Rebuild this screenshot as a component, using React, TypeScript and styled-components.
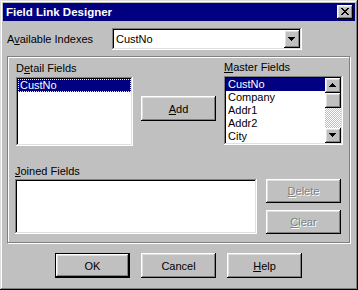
import React from "react";
import styled, { createGlobalStyle, css } from "styled-components";

const GlobalStyle = createGlobalStyle`
  html, body { margin: 0; padding: 0; background: #c0c0c0; }
  body { font-family: "Liberation Sans", Arial, sans-serif; font-size: 11px; }
  * { box-sizing: border-box; }
`;

const raised = css`
  box-shadow: inset -1px -1px #000, inset 1px 1px #fff, inset -2px -2px #808080,
    inset 2px 2px #dfdfdf;
`;

const sunken = css`
  box-shadow: inset -1px -1px #fff, inset 1px 1px #808080, inset -2px -2px #dfdfdf,
    inset 2px 2px #000;
`;

const Window = styled.div`
  width: 358px;
  height: 290px;
  padding: 3px;
  background: #c0c0c0;
  box-shadow: inset -1px -1px #000, inset 1px 1px #dfdfdf, inset -2px -2px #808080,
    inset 2px 2px #fff;
  display: flex;
  flex-direction: column;
  font-family: "Liberation Sans", Arial, sans-serif;
  font-size: 11px;
  color: #000;
`;

const TitleBar = styled.div`
  flex: none;
  height: 18px;
  background: #000080;
  color: #fff;
  display: flex;
  align-items: center;
  justify-content: space-between;
  padding: 0 2px 0 3px;
`;

const Title = styled.span`
  font-weight: bold;
  font-size: 11.5px;
  line-height: 18px;
`;

const CloseButton = styled.div`
  width: 16px;
  height: 14px;
  background: #c0c0c0;
  ${raised}
  display: flex;
  align-items: center;
  justify-content: center;
  padding: 0 1px 1px 0;
`;

const Body = styled.div`
  display: flex;
  flex-direction: column;
  padding-left: 4px;
`;

const IndexRow = styled.div`
  display: flex;
  align-items: center;
  height: 22px;
  margin-top: 7px;
`;

const FieldLabel = styled.div<{ $gap?: number }>`
  height: 13px;
  line-height: 13px;
  white-space: nowrap;
  margin-bottom: ${(p) => p.$gap ?? 2}px;
`;

const IndexLabel = styled(FieldLabel)`
  width: 105px;
  margin-bottom: 0;
`;

const Combo = styled.div`
  width: 190px;
  height: 22px;
  padding: 2px;
  background: #fff;
  ${sunken}
  display: flex;
  align-items: center;
`;

const ComboText = styled.span`
  flex: 1;
  padding-left: 2px;
  line-height: 13px;
`;

const ArrowButton = styled.div<{ $h: number }>`
  flex: none;
  width: 16px;
  height: ${(p) => p.$h}px;
  background: #c0c0c0;
  ${raised}
  display: flex;
  align-items: center;
  justify-content: center;
  padding: 0 1px 1px 0;
`;

const Key = styled.span`
  text-decoration: underline;
  text-underline-offset: 1px;
`;

const Group = styled.div`
  width: 343px;
  height: 187px;
  margin-top: 6px;
  border: 1px solid #808080;
  box-shadow: inset 1px 1px #fff, 1px 1px #fff;
  display: flex;
  flex-direction: column;
`;

const Section = styled.div<{ $mt?: number }>`
  display: flex;
  align-items: flex-start;
  margin-top: ${(p) => p.$mt ?? 0}px;
`;

const Column = styled.div<{ $ml: number; $mt?: number }>`
  display: flex;
  flex-direction: column;
  margin-left: ${(p) => p.$ml}px;
  margin-top: ${(p) => p.$mt ?? 0}px;
`;

const ListBox = styled.div<{ $w: number; $h: number }>`
  width: ${(p) => p.$w}px;
  height: ${(p) => p.$h}px;
  padding: 2px;
  background: #fff;
  ${sunken}
  display: flex;
  overflow: hidden;
`;

const Items = styled.div`
  flex: 1;
  display: flex;
  flex-direction: column;
  min-width: 0;
`;

const Item = styled.div<{ $selected?: boolean; $focused?: boolean }>`
  height: 13px;
  line-height: 13px;
  padding-left: 2px;
  white-space: nowrap;
  background: ${(p) => (p.$selected ? "#000080" : "transparent")};
  color: ${(p) => (p.$selected ? "#fff" : "#000")};
  ${(p) =>
    p.$focused &&
    css`
      outline: 1px dotted #ffff80;
      outline-offset: -1px;
    `}
`;

const ScrollBar = styled.div`
  flex: none;
  width: 16px;
  display: flex;
  flex-direction: column;
`;

const ScrollThumb = styled.div`
  height: 15px;
  background: #c0c0c0;
  ${raised}
`;

const ScrollTrack = styled.div`
  flex: 1;
  background: repeating-conic-gradient(#fff 0 25%, #c0c0c0 0 50%) 0 0 / 2px 2px;
`;

const Button = styled.button<{ $default?: boolean; $h?: number; $ml?: number; $mt?: number }>`
  flex: none;
  width: 75px;
  height: ${(p) => p.$h ?? 25}px;
  margin-left: ${(p) => p.$ml ?? 0}px;
  margin-top: ${(p) => p.$mt ?? 0}px;
  padding: 0;
  border: none;
  background: #c0c0c0;
  font-family: "Liberation Sans", Arial, sans-serif;
  font-size: 11px;
  color: #000;
  ${(p) =>
    p.$default
      ? css`
          box-shadow: inset 0 0 0 1px #000, inset -2px -2px #000, inset 2px 2px #fff,
            inset -3px -3px #808080, inset 3px 3px #dfdfdf;
        `
      : raised}
  &:disabled {
    color: #808080;
    text-shadow: 1px 1px 0 #fff;
  }
`;

const ButtonStack = styled.div`
  display: flex;
  flex-direction: column;
  gap: 7px;
  margin-left: 9px;
  margin-top: 14px;
`;

const ButtonRow = styled.div`
  display: flex;
  gap: 11px;
  margin-top: 10px;
  padding-left: 48px;
`;

const Triangle = ({ dir }: { dir: "up" | "down" }) => (
  <svg width="7" height="4" viewBox="0 0 7 4" shapeRendering="crispEdges">
    {[0, 1, 2, 3].map((i) => {
      const w = dir === "down" ? 7 - 2 * i : 1 + 2 * i;
      return <rect key={i} x={(7 - w) / 2} y={i} width={w} height={1} fill="#000" />;
    })}
  </svg>
);

const CloseGlyph = () => {
  const rows = ["XX....XX", ".XX..XX.", "..XXXX..", "...XX...", "..XXXX..", ".XX..XX.", "XX....XX"];
  return (
    <svg width="8" height="7" viewBox="0 0 8 7" shapeRendering="crispEdges">
      {rows.flatMap((r, y) =>
        r.split("").map((c, x) =>
          c === "X" ? <rect key={`${x}-${y}`} x={x} y={y} width={1} height={1} fill="#000" /> : null
        )
      )}
    </svg>
  );
};

const masterFields = ["CustNo", "Company", "Addr1", "Addr2", "City"];

export default function App() {
  return (
    <>
      <GlobalStyle />
      <Window>
        <TitleBar>
          <Title>Field Link Designer</Title>
          <CloseButton>
            <CloseGlyph />
          </CloseButton>
        </TitleBar>
        <Body>
          <IndexRow>
            <IndexLabel>
              A<Key>v</Key>ailable Indexes
            </IndexLabel>
            <Combo>
              <ComboText>CustNo</ComboText>
              <ArrowButton $h={18}>
                <Triangle dir="down" />
              </ArrowButton>
            </Combo>
          </IndexRow>
          <Group>
            <Section>
              <Column $ml={8} $mt={5}>
                <FieldLabel>
                  D<Key>e</Key>tail Fields
                </FieldLabel>
                <ListBox $w={117} $h={69}>
                  <Items>
                    <Item $selected $focused>
                      CustNo
                    </Item>
                  </Items>
                </ListBox>
              </Column>
              <Button $ml={8} $mt={39}>
                <Key>A</Key>dd
              </Button>
              <Column $ml={8} $mt={4}>
                <FieldLabel>
                  <Key>M</Key>aster Fields
                </FieldLabel>
                <ListBox $w={119} $h={69}>
                  <Items>
                    {masterFields.map((f, i) => (
                      <Item key={f} $selected={i === 0}>
                        {f}
                      </Item>
                    ))}
                  </Items>
                  <ScrollBar>
                    <ArrowButton $h={15}>
                      <Triangle dir="up" />
                    </ArrowButton>
                    <ScrollThumb />
                    <ScrollTrack />
                    <ArrowButton $h={15}>
                      <Triangle dir="down" />
                    </ArrowButton>
                  </ScrollBar>
                </ListBox>
              </Column>
            </Section>
            <Section $mt={19}>
              <Column $ml={7}>
                <FieldLabel $gap={1}>
                  <Key>J</Key>oined Fields
                </FieldLabel>
                <ListBox $w={242} $h={55} />
              </Column>
              <ButtonStack>
                <Button $h={24} disabled>
                  <Key>D</Key>elete
                </Button>
                <Button $h={24} disabled>
                  <Key>C</Key>lear
                </Button>
              </ButtonStack>
            </Section>
          </Group>
          <ButtonRow>
            <Button $default>OK</Button>
            <Button>Cancel</Button>
            <Button>
              <Key>H</Key>elp
            </Button>
          </ButtonRow>
        </Body>
      </Window>
    </>
  );
}
